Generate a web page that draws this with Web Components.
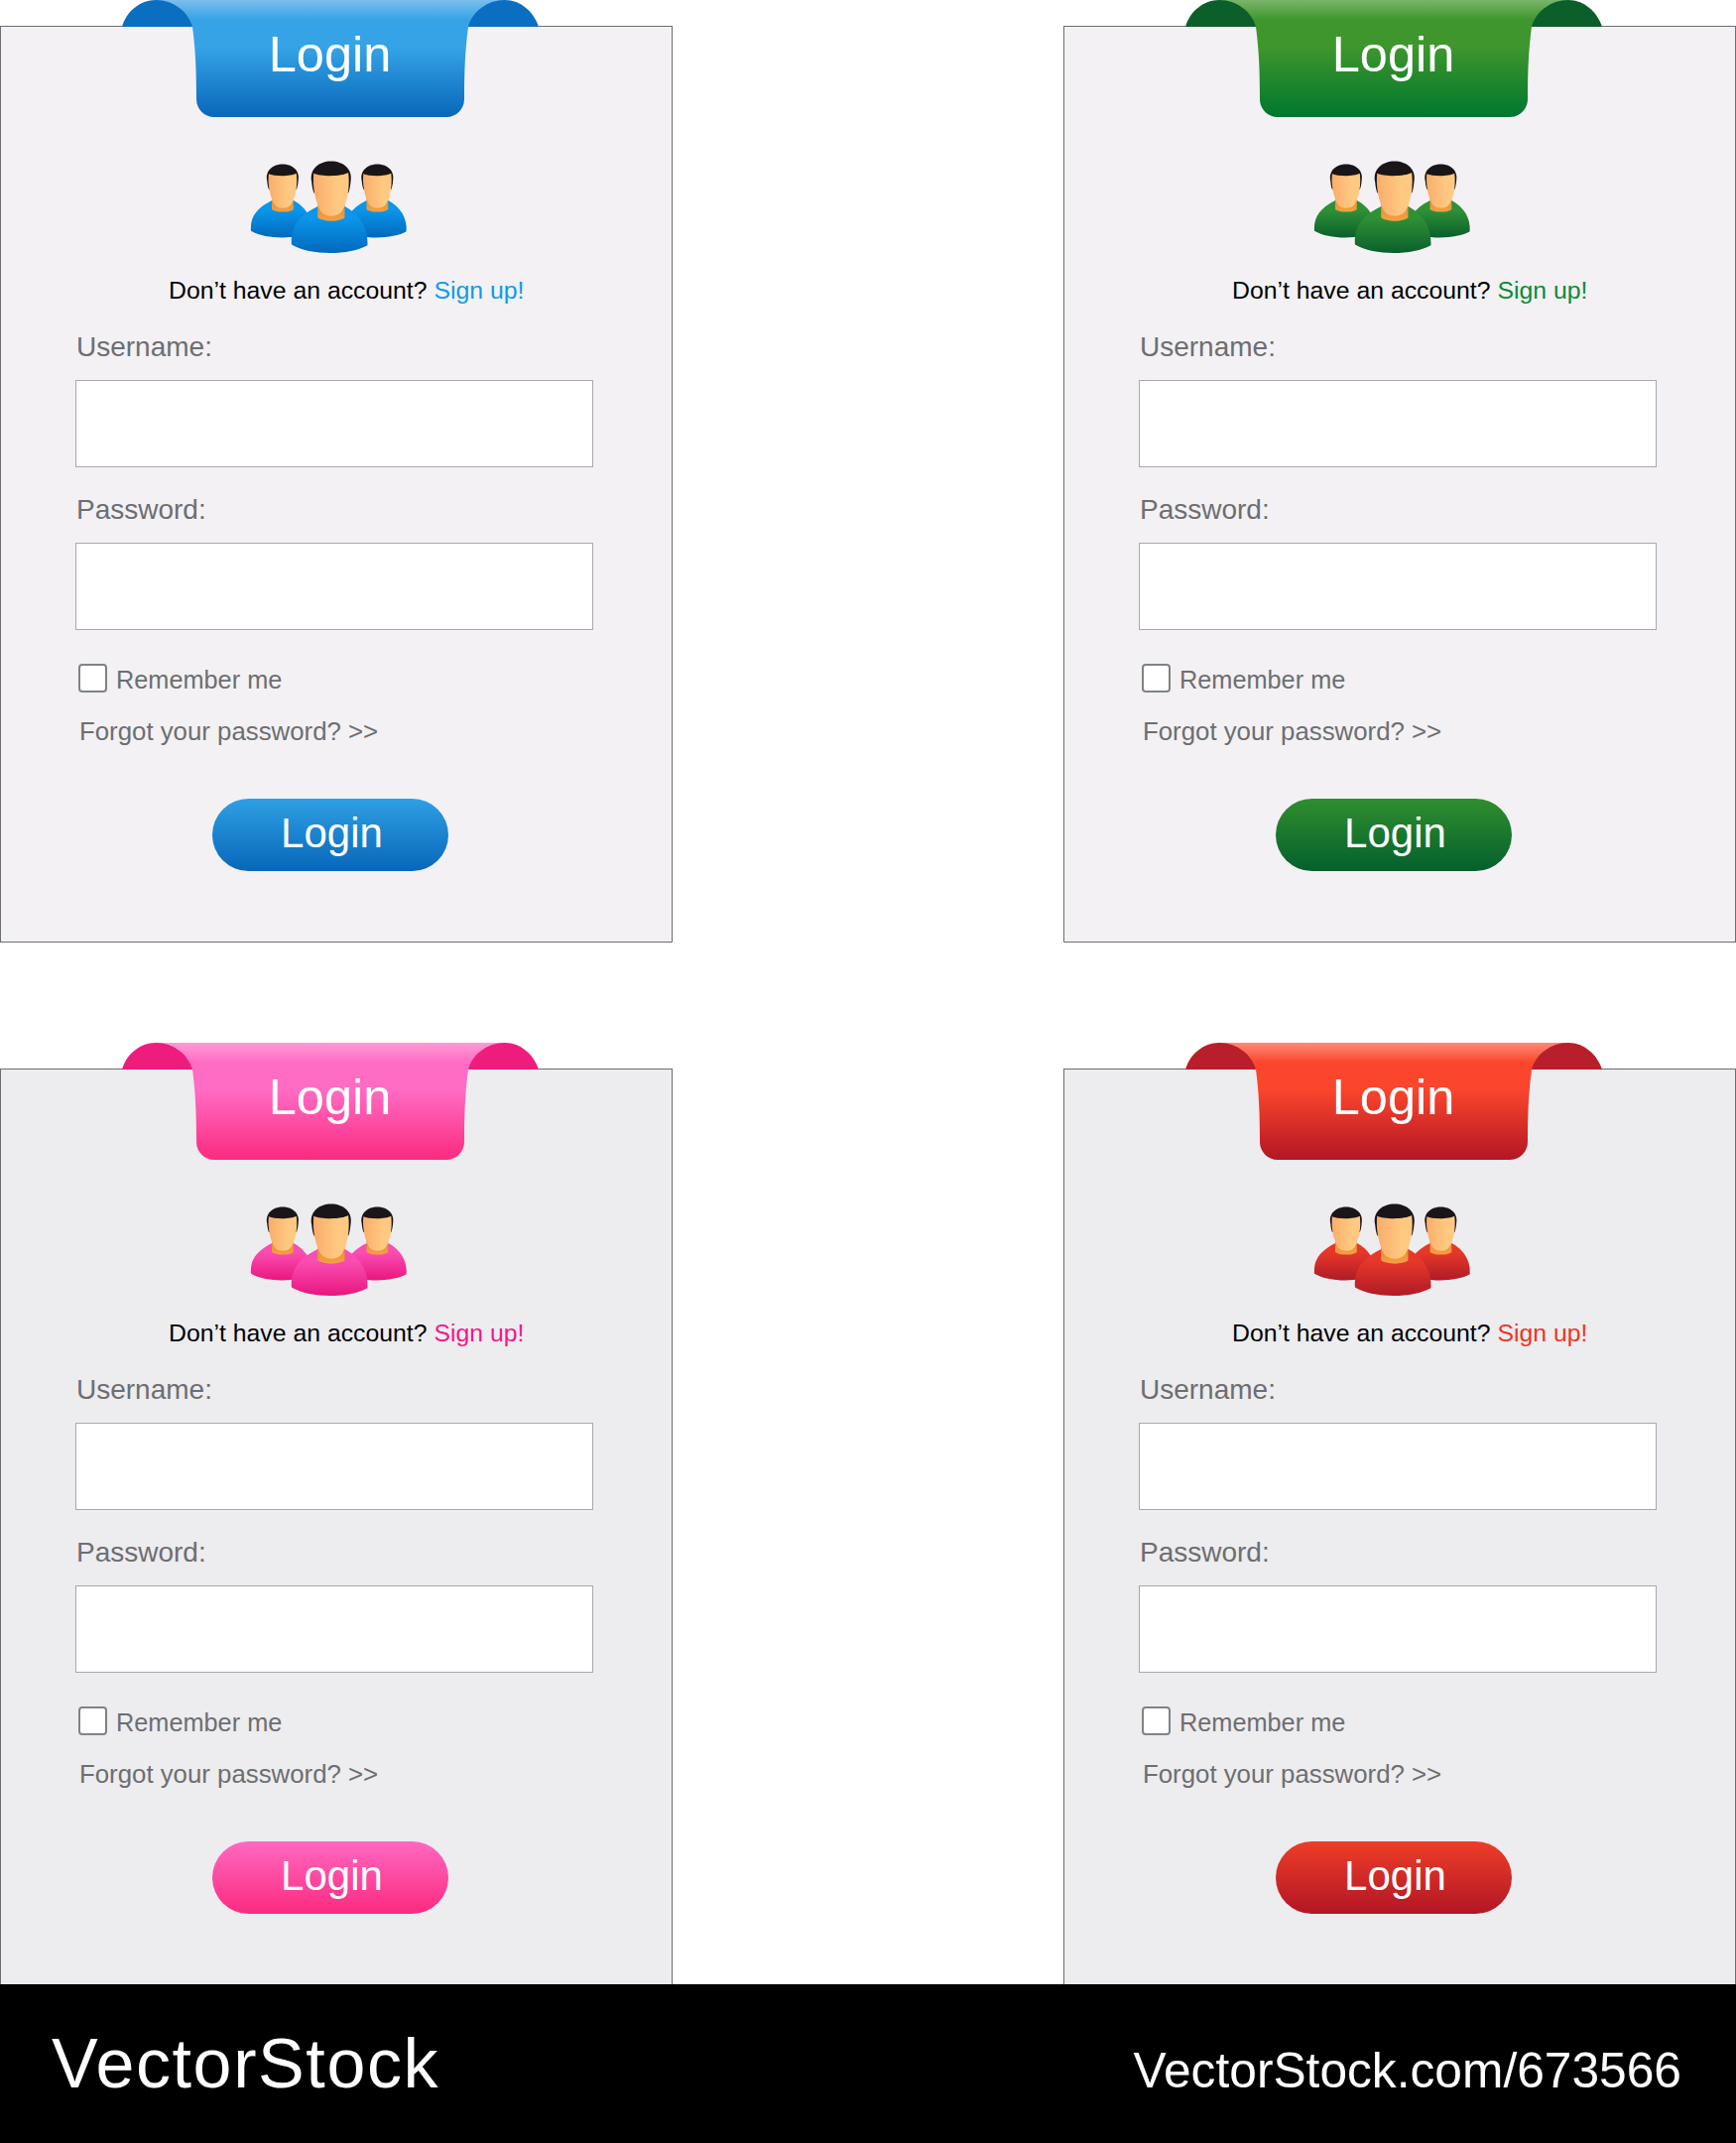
<!DOCTYPE html>
<html>
<head>
<meta charset="utf-8">
<title>Login forms</title>
<style>
  html, body { margin: 0; padding: 0; background: #fff; }
  body { font-family: "Liberation Sans", Arial, sans-serif; }
</style>
</head>
<body>
<stock-page>
  <login-card theme="blue"></login-card>
  <login-card theme="green"></login-card>
  <login-card theme="pink"></login-card>
  <login-card theme="red"></login-card>
</stock-page>

<script>
const THEMES = {
  blue:  { hi: '#7cbdec', top: '#35a3e6', bottom: '#0867ba', flap: '#0a6fc0', link: '#0d9be8', shirt: '#0a96ea', shirtEnd: '#0069bd', btnTop: '#2f9fe3', card: '#f3f1f4' },
  green: { hi: '#7ab56a', top: '#3e962c', bottom: '#00772e', flap: '#0a5f2b', link: '#0b8a35', shirt: '#2e9136', shirtEnd: '#0b5f2c', btnTop: '#2f8e2f', card: '#f3f1f4', btnBottom: '#04602c' },
  pink:  { hi: '#ff9bd6', top: '#ff6cc4', bottom: '#fb2a80', flap: '#ee1c7c', link: '#f5158a', shirt: '#fa4db2', shirtEnd: '#e8167e', btnTop: '#ff69c1', card: '#edecef' },
  red:   { hi: '#ff8a78', top: '#fb452c', bottom: '#b21625', flap: '#b81f2a', link: '#f0341f', shirt: '#e6382a', shirtEnd: '#b01a25', btnTop: '#ee3d28', card: '#edecef' }
};

class RibbonTab extends HTMLElement {
  connectedCallback() {
    const t = THEMES[this.getAttribute('theme')];
    this.attachShadow({ mode: 'open' });
    this.shadowRoot.innerHTML = `
      <style>
        :host {
          display: flex;
          position: absolute;
          top: -27.5px;
          left: 121.5px;
          width: 420px;
          height: 118px;
        }
        svg { position: absolute; inset: 0; overflow: visible; }
        .label {
          position: relative;
          width: 100%;
          text-align: center;
          color: #fff;
          font-size: 50.5px;
          line-height: 56px;
          padding-top: 27px;
        }
      </style>
      <svg width="420" height="118" viewBox="0 0 420 118">
        <defs>
          <linearGradient id="tab" x1="0" y1="0" x2="0" y2="1">
            <stop offset="0" stop-color="${t.hi}"/>
            <stop offset="0.17" stop-color="${t.top}"/>
            <stop offset="0.4" stop-color="${t.top}"/>
            <stop offset="1" stop-color="${t.bottom}"/>
          </linearGradient>
        </defs>
        <path fill="${t.flap}" d="M0 27C4 12 18 0 34 0H386C402 0 415 12 420 27Z"/>
        <path fill="url(#tab)" d="M34 0H386C368 0 353 12 349 27C346 50 345 70 345 100C345 110 337 118 327 118H93C83 118 75 110 75 100C75 70 74 50 71 27C67 12 52 0 34 0Z"/>
      </svg>
      <div class="label"><slot></slot></div>
    `;
  }
}

class UserGroup extends HTMLElement {
  connectedCallback() {
    const t = THEMES[this.getAttribute('theme')];
    this.attachShadow({ mode: 'open' });
    this.shadowRoot.innerHTML = `
      <style>
        :host { display: block; width: 159px; height: 94px; }
        svg { display: block; }
      </style>
      <svg width="159" height="94" viewBox="96 36 478 282">
        <defs>
          <linearGradient id="shirt" x1="0" y1="0" x2="0" y2="1">
            <stop offset="0.25" stop-color="${t.shirt}"/>
            <stop offset="1" stop-color="${t.shirtEnd}"/>
          </linearGradient>
          <linearGradient id="face" x1="0" y1="0" x2="1" y2="0">
            <stop offset="0" stop-color="#f9ad6b"/>
            <stop offset="0.7" stop-color="#ffc981"/>
          </linearGradient>
          <linearGradient id="neck" x1="0" y1="0" x2="0" y2="1">
            <stop offset="0" stop-color="#e08a34"/>
            <stop offset="1" stop-color="#f4a042"/>
          </linearGradient>
          <g id="person">
            <path fill="url(#shirt)" d="M222 290C218 240 240 205 300 175H385C430 200 455 240 452 292C400 322 280 325 222 290Z"/>
            <path fill="url(#neck)" d="M301 160H383V206C383 213 360 218 343 218C326 218 301 213 301 206Z"/>
            <path fill="#1a1518" d="M283 100C275 60 306 37 342 37C378 37 409 60 401 100C400 112 398 124 394 134L340 90L290 134C286 124 284 112 283 100Z"/>
            <path fill="url(#face)" d="M289 74C310 84 375 84 394 72C399 112 393 160 374 190C360 208 325 208 311 190C293 160 285 112 289 74Z"/>
          </g>
        </defs>
        <use href="#person" transform="translate(-78.6 16.4) scale(.8)"/>
        <use href="#person" transform="translate(208.4 16.4) scale(.8)"/>
        <use href="#person"/>
      </svg>
    `;
  }
}

class FormField extends HTMLElement {
  connectedCallback() {
    this.attachShadow({ mode: 'open' });
    this.shadowRoot.innerHTML = `
      <style>
        :host { display: block; }
        label {
          display: block;
          margin-left: 76px;
          color: #6d6e71;
          font-size: 28px;
          line-height: 32px;
        }
        .box {
          display: block;
          box-sizing: border-box;
          width: 522px;
          height: 88px;
          margin: 17px 0 0 75px;
          background: #fff;
          border: 1.5px solid #a7a9ac;
        }
      </style>
      <label><slot></slot></label>
      <div class="box"></div>
    `;
  }
}

class RememberRow extends HTMLElement {
  connectedCallback() {
    this.attachShadow({ mode: 'open' });
    this.shadowRoot.innerHTML = `
      <style>
        :host {
          display: flex;
          align-items: flex-start;
          gap: 9px;
          margin-left: 78px;
          color: #6d6e71;
          font-size: 25.3px;
          line-height: 30px;
        }
        .check {
          box-sizing: border-box;
          width: 29px;
          height: 29px;
          background: #fff;
          border: 2px solid #808285;
          border-radius: 4px;
        }
        span { margin-top: 1px; }
      </style>
      <div class="check"></div>
      <span><slot></slot></span>
    `;
  }
}

class PillButton extends HTMLElement {
  connectedCallback() {
    const t = THEMES[this.getAttribute('theme')];
    this.attachShadow({ mode: 'open' });
    this.shadowRoot.innerHTML = `
      <style>
        :host {
          display: flex;
          align-items: center;
          justify-content: center;
          box-sizing: border-box;
          width: 238px;
          height: 73px;
          margin-left: 213px;
          padding: 0 0 3px 3px;
          border-radius: 37px;
          color: #fff;
          font-size: 42px;
          background: linear-gradient(${t.btnTop}, ${t.btnBottom || t.bottom});
        }
      </style>
      <slot></slot>
    `;
  }
}

class LoginCard extends HTMLElement {
  connectedCallback() {
    const name = this.getAttribute('theme');
    const t = THEMES[name];
    this.attachShadow({ mode: 'open' });
    this.shadowRoot.innerHTML = `
      <style>
        :host {
          display: block;
          position: relative;
          box-sizing: border-box;
          width: 678px;
          height: 924px;
          padding-top: 135px;
          background: ${t.card};
          border: 1.5px solid #6d6e71;
        }
        user-group { margin-left: 251px; }
        .signup {
          margin: 22px 0 0 169px;
          color: #000;
          font-size: 24.8px;
          line-height: 30px;
          white-space: nowrap;
        }
        .signup span { color: ${t.link}; }
        form-field { margin-top: 26px; }
        form-field + form-field { margin-top: 27px; }
        remember-row { margin-top: 34px; }
        .forgot {
          margin: 22px 0 0 79px;
          color: #6d6e71;
          font-size: 25.8px;
          line-height: 30px;
        }
        pill-button { margin-top: 53px; }
      </style>
      <ribbon-tab theme="${name}">Login</ribbon-tab>
      <user-group theme="${name}"></user-group>
      <div class="signup">Don’t have an account? <span>Sign up!</span></div>
      <form-field>Username:</form-field>
      <form-field>Password:</form-field>
      <remember-row>Remember me</remember-row>
      <div class="forgot">Forgot your password? &gt;&gt;</div>
      <pill-button theme="${name}">Login</pill-button>
    `;
  }
}

class StockFooter extends HTMLElement {
  connectedCallback() {
    this.attachShadow({ mode: 'open' });
    this.shadowRoot.innerHTML = `
      <style>
        :host {
          display: flex;
          justify-content: space-between;
          box-sizing: border-box;
          height: 160px;
          padding: 40px 55px 0 52px;
          background: #000;
          color: #fff;
        }
        .brand { font-size: 70px; line-height: 80px; letter-spacing: 1.6px; }
        .url { font-size: 49.7px; line-height: 56px; margin-top: 19px; }
      </style>
      <div class="brand">VectorStock</div>
      <div class="url">VectorStock.com/673566</div>
    `;
  }
}

class StockPage extends HTMLElement {
  connectedCallback() {
    this.attachShadow({ mode: 'open' });
    this.shadowRoot.innerHTML = `
      <style>
        :host { display: block; width: 1750px; height: 2160px; overflow: hidden; }
        .sheet {
          display: grid;
          grid-template-columns: 678px 678px;
          justify-content: space-between;
          row-gap: 127px;
          box-sizing: border-box;
          height: 2000px;
          padding-top: 26px;
          overflow: hidden;
        }
      </style>
      <div class="sheet"><slot></slot></div>
      <stock-footer></stock-footer>
    `;
  }
}

customElements.define('ribbon-tab', RibbonTab);
customElements.define('user-group', UserGroup);
customElements.define('form-field', FormField);
customElements.define('remember-row', RememberRow);
customElements.define('pill-button', PillButton);
customElements.define('login-card', LoginCard);
customElements.define('stock-footer', StockFooter);
customElements.define('stock-page', StockPage);
</script>
</body>
</html>
